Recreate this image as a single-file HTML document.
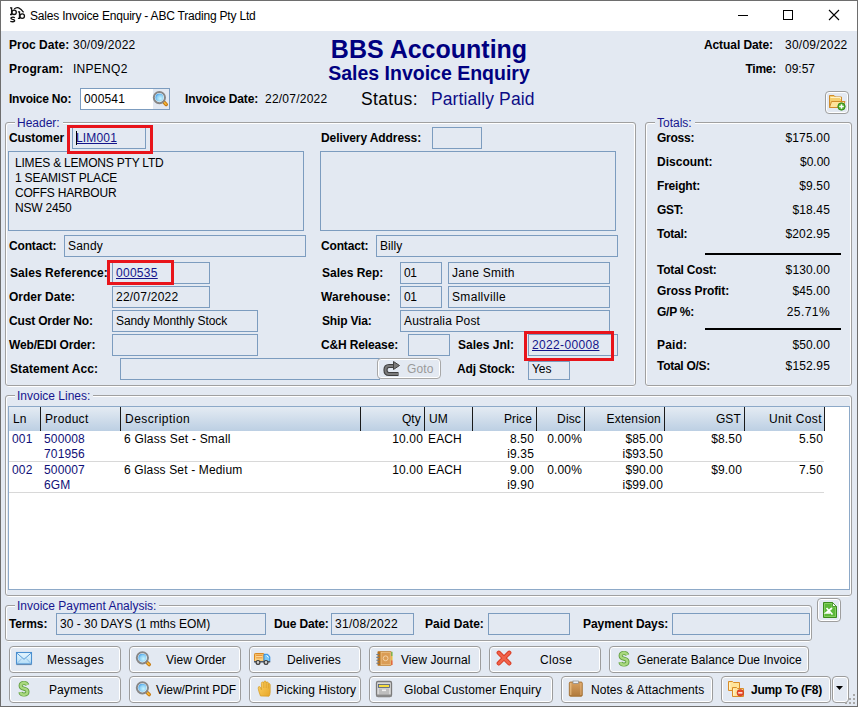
<!DOCTYPE html>
<html><head><meta charset="utf-8"><style>
html,body{margin:0;padding:0;width:858px;height:707px;overflow:hidden;background:#E3E9F2;}
.t{position:absolute;font-family:"Liberation Sans",sans-serif;white-space:pre;}
svg{overflow:visible}
</style></head><body>
<div style="position:absolute;left:0px;top:0px;width:858px;height:707px;box-sizing:border-box;border:1px solid #6E6E6E;background:#E3E9F2"></div>
<div style="position:absolute;left:1px;top:1px;width:856px;height:30px;box-sizing:border-box;background:#fff"></div>
<div class="t" style="left:30px;top:10px;font-size:12px;line-height:12px;font-weight:400;color:#000;letter-spacing:-0.2px;">Sales Invoice Enquiry - ABC Trading Pty Ltd</div>
<div style="position:absolute;left:738px;top:15px;width:10px;height:1px;box-sizing:border-box;background:#000"></div>
<div style="position:absolute;left:783px;top:10px;width:10px;height:10px;box-sizing:border-box;border:1px solid #000"></div>
<svg style="position:absolute;left:828px;top:9px" width="12" height="12" viewBox="0 0 12 12"><path d="M1 1 L11 11 M11 1 L1 11" stroke="#000" stroke-width="1.1"/></svg>
<div class="t" style="left:9px;top:39px;font-size:12px;line-height:12px;font-weight:700;color:#000;letter-spacing:0.02px;">Proc Date:</div>
<div class="t" style="left:73px;top:39px;font-size:12px;line-height:12px;font-weight:400;color:#000;letter-spacing:0.24px;">30/09/2022</div>
<div class="t" style="left:9px;top:63px;font-size:12px;line-height:12px;font-weight:700;color:#000;letter-spacing:0.13px;">Program:</div>
<div class="t" style="left:73px;top:63px;font-size:12px;line-height:12px;font-weight:400;color:#000;letter-spacing:0.27px;">INPENQ2</div>
<div class="t" style="left:129px;width:600px;text-align:center;top:37px;font-size:25px;line-height:25px;font-weight:700;color:#000080;">BBS Accounting</div>
<div class="t" style="left:129px;width:600px;text-align:center;top:64px;font-size:19.5px;line-height:19.5px;font-weight:700;color:#000080;">Sales Invoice Enquiry</div>
<div class="t" style="right:85px;top:39px;font-size:12px;line-height:12px;font-weight:700;color:#000;letter-spacing:-0.08px;">Actual Date:</div>
<div class="t" style="left:785px;top:39px;font-size:12px;line-height:12px;font-weight:400;color:#000;letter-spacing:0.24px;">30/09/2022</div>
<div class="t" style="right:82px;top:63px;font-size:12px;line-height:12px;font-weight:700;color:#000;letter-spacing:-0.25px;">Time:</div>
<div class="t" style="left:785px;top:63px;font-size:12px;line-height:12px;font-weight:400;color:#000;letter-spacing:0.0px;">09:57</div>
<div class="t" style="left:9px;top:93px;font-size:12px;line-height:12px;font-weight:700;color:#000;letter-spacing:-0.23px;">Invoice No:</div>
<div style="position:absolute;left:80px;top:88px;width:90px;height:22px;box-sizing:border-box;border:1px solid #7C9CBF;background:#fff;"></div>
<div style="position:absolute;left:153px;top:89px;width:16px;height:20px;box-sizing:border-box;background:#E3E9F2"></div>
<div class="t" style="left:84px;top:93px;font-size:12px;line-height:12px;font-weight:400;color:#000;letter-spacing:0.16px;">000541</div>
<div class="t" style="left:185px;top:93px;font-size:12px;line-height:12px;font-weight:700;color:#000;letter-spacing:-0.12px;">Invoice Date:</div>
<div class="t" style="left:265px;top:93px;font-size:12px;line-height:12px;font-weight:400;color:#000;letter-spacing:0.23px;">22/07/2022</div>
<div class="t" style="left:361px;top:91px;font-size:17.5px;line-height:17.5px;font-weight:400;color:#000;letter-spacing:0.35px;">Status:</div>
<div class="t" style="left:431px;top:91px;font-size:17.5px;line-height:17.5px;font-weight:400;color:#0C0C86;letter-spacing:0.1px;">Partially Paid</div>
<div style="position:absolute;left:825px;top:91px;width:24px;height:23px;box-sizing:border-box;border:1px solid #9E9E9E;border-radius:4px;box-shadow:inset 0 0 0 1px #fff;"></div>
<div style="position:absolute;left:6px;top:123px;width:629px;height:264px;box-sizing:border-box;border:1px solid #fff;border-radius:3px;"></div>
<div style="position:absolute;left:5px;top:122px;width:631px;height:264px;box-sizing:border-box;border:1px solid #A0A0A0;border-radius:3px;"></div>
<div class="t" style="left:15px;top:116px;font-size:12px;line-height:14px;color:#16168F;background:#E3E9F2;padding:0 3px 0 2px">Header:</div>
<div class="t" style="left:9px;top:132px;font-size:12px;line-height:12px;font-weight:700;color:#000;letter-spacing:-0.13px;">Customer</div>
<div style="position:absolute;left:72px;top:127px;width:74px;height:22px;box-sizing:border-box;border:1px solid #7C9CBF;background:#E3E9F2;"></div>
<div class="t" style="left:76px;top:132px;font-size:12px;line-height:12px;font-weight:400;color:#14148A;letter-spacing:0.16px;"><u>LIM001</u></div>
<div style="position:absolute;left:76px;top:131px;width:1px;height:14px;box-sizing:border-box;background:#000"></div>
<div style="position:absolute;left:67px;top:125px;width:86px;height:29px;box-sizing:border-box;border:3px solid #E8141B;z-index:4;"></div>
<div class="t" style="left:321px;top:132px;font-size:12px;line-height:12px;font-weight:700;color:#000;letter-spacing:-0.09px;">Delivery Address:</div>
<div style="position:absolute;left:432px;top:127px;width:50px;height:22px;box-sizing:border-box;border:1px solid #7C9CBF;background:#E3E9F2;"></div>
<div style="position:absolute;left:8px;top:151px;width:296px;height:80px;box-sizing:border-box;border:1px solid #7C9CBF;background:#E3E9F2;"></div>
<div class="t" style="left:15px;top:157px;font-size:12px;line-height:12px;font-weight:400;color:#000;letter-spacing:-0.2px;">LIMES &amp; LEMONS PTY LTD</div>
<div class="t" style="left:15px;top:172px;font-size:12px;line-height:12px;font-weight:400;color:#000;letter-spacing:-0.2px;">1 SEAMIST PLACE</div>
<div class="t" style="left:15px;top:187px;font-size:12px;line-height:12px;font-weight:400;color:#000;letter-spacing:-0.2px;">COFFS HARBOUR</div>
<div class="t" style="left:15px;top:202px;font-size:12px;line-height:12px;font-weight:400;color:#000;letter-spacing:-0.2px;">NSW 2450</div>
<div style="position:absolute;left:320px;top:151px;width:296px;height:80px;box-sizing:border-box;border:1px solid #7C9CBF;background:#E3E9F2;"></div>
<div class="t" style="left:9px;top:240px;font-size:12px;line-height:12px;font-weight:700;color:#000;letter-spacing:-0.17px;">Contact:</div>
<div style="position:absolute;left:64px;top:235px;width:242px;height:22px;box-sizing:border-box;border:1px solid #7C9CBF;background:#E3E9F2;"></div>
<div class="t" style="left:68px;top:240px;font-size:12px;line-height:12px;font-weight:400;color:#000;letter-spacing:0.2px;">Sandy</div>
<div class="t" style="left:321px;top:240px;font-size:12px;line-height:12px;font-weight:700;color:#000;letter-spacing:-0.17px;">Contact:</div>
<div style="position:absolute;left:376px;top:235px;width:242px;height:22px;box-sizing:border-box;border:1px solid #7C9CBF;background:#E3E9F2;"></div>
<div class="t" style="left:380px;top:240px;font-size:12px;line-height:12px;font-weight:400;color:#000;letter-spacing:0.08px;">Billy</div>
<div class="t" style="left:10px;top:267px;font-size:12px;line-height:12px;font-weight:700;color:#000;letter-spacing:0.07px;">Sales Reference:</div>
<div style="position:absolute;left:112px;top:262px;width:98px;height:22px;box-sizing:border-box;border:1px solid #7C9CBF;background:#E3E9F2;"></div>
<div class="t" style="left:116px;top:267px;font-size:12px;line-height:12px;font-weight:400;color:#14148A;letter-spacing:0.28px;"><u>000535</u></div>
<div style="position:absolute;left:107px;top:260px;width:67px;height:25px;box-sizing:border-box;border:3px solid #E8141B;z-index:4;"></div>
<div class="t" style="left:9px;top:291px;font-size:12px;line-height:12px;font-weight:700;color:#000;letter-spacing:0.01px;">Order Date:</div>
<div style="position:absolute;left:112px;top:286px;width:98px;height:22px;box-sizing:border-box;border:1px solid #7C9CBF;background:#E3E9F2;"></div>
<div class="t" style="left:116px;top:291px;font-size:12px;line-height:12px;font-weight:400;color:#000;letter-spacing:0.23px;">22/07/2022</div>
<div class="t" style="left:9px;top:315px;font-size:12px;line-height:12px;font-weight:700;color:#000;letter-spacing:-0.16px;">Cust Order No:</div>
<div style="position:absolute;left:112px;top:310px;width:146px;height:22px;box-sizing:border-box;border:1px solid #7C9CBF;background:#E3E9F2;"></div>
<div class="t" style="left:116px;top:315px;font-size:12px;line-height:12px;font-weight:400;color:#000;letter-spacing:-0.08px;">Sandy Monthly Stock</div>
<div class="t" style="left:9px;top:339px;font-size:12px;line-height:12px;font-weight:700;color:#000;letter-spacing:-0.16px;">Web/EDI Order:</div>
<div style="position:absolute;left:112px;top:334px;width:146px;height:22px;box-sizing:border-box;border:1px solid #7C9CBF;background:#E3E9F2;"></div>
<div class="t" style="left:10px;top:363px;font-size:12px;line-height:12px;font-weight:700;color:#000;letter-spacing:0.08px;">Statement Acc:</div>
<div style="position:absolute;left:120px;top:358px;width:260px;height:22px;box-sizing:border-box;border:1px solid #7C9CBF;background:#E3E9F2;"></div>
<div class="t" style="left:322px;top:267px;font-size:12px;line-height:12px;font-weight:700;color:#000;letter-spacing:-0.01px;">Sales Rep:</div>
<div style="position:absolute;left:400px;top:262px;width:42px;height:22px;box-sizing:border-box;border:1px solid #7C9CBF;background:#E3E9F2;"></div>
<div class="t" style="left:404px;top:267px;font-size:12px;line-height:12px;font-weight:400;color:#000;letter-spacing:-0.5px;">01</div>
<div style="position:absolute;left:448px;top:262px;width:162px;height:22px;box-sizing:border-box;border:1px solid #7C9CBF;background:#E3E9F2;"></div>
<div class="t" style="left:452px;top:267px;font-size:12px;line-height:12px;font-weight:400;color:#000;letter-spacing:0.27px;">Jane Smith</div>
<div class="t" style="left:321px;top:291px;font-size:12px;line-height:12px;font-weight:700;color:#000;letter-spacing:0.13px;">Warehouse:</div>
<div style="position:absolute;left:400px;top:286px;width:42px;height:22px;box-sizing:border-box;border:1px solid #7C9CBF;background:#E3E9F2;"></div>
<div class="t" style="left:404px;top:291px;font-size:12px;line-height:12px;font-weight:400;color:#000;letter-spacing:-0.5px;">01</div>
<div style="position:absolute;left:448px;top:286px;width:162px;height:22px;box-sizing:border-box;border:1px solid #7C9CBF;background:#E3E9F2;"></div>
<div class="t" style="left:452px;top:291px;font-size:12px;line-height:12px;font-weight:400;color:#000;letter-spacing:0.32px;">Smallville</div>
<div class="t" style="left:322px;top:315px;font-size:12px;line-height:12px;font-weight:700;color:#000;letter-spacing:-0.17px;">Ship Via:</div>
<div style="position:absolute;left:400px;top:310px;width:210px;height:22px;box-sizing:border-box;border:1px solid #7C9CBF;background:#E3E9F2;"></div>
<div class="t" style="left:404px;top:315px;font-size:12px;line-height:12px;font-weight:400;color:#000;letter-spacing:0.14px;">Australia Post</div>
<div class="t" style="left:321px;top:339px;font-size:12px;line-height:12px;font-weight:700;color:#000;letter-spacing:-0.14px;">C&amp;H Release:</div>
<div style="position:absolute;left:408px;top:334px;width:42px;height:22px;box-sizing:border-box;border:1px solid #7C9CBF;background:#E3E9F2;"></div>
<div class="t" style="left:458px;top:339px;font-size:12px;line-height:12px;font-weight:700;color:#000;letter-spacing:0.01px;">Sales Jnl:</div>
<div style="position:absolute;left:528px;top:334px;width:90px;height:22px;box-sizing:border-box;border:1px solid #7C9CBF;background:#E3E9F2;"></div>
<div class="t" style="left:532px;top:339px;font-size:12px;line-height:12px;font-weight:400;color:#14148A;letter-spacing:0.34px;"><u>2022-00008</u></div>
<div style="position:absolute;left:524px;top:331px;width:90px;height:30px;box-sizing:border-box;border:3px solid #E8141B;z-index:4;"></div>
<div style="position:absolute;left:377px;top:358px;width:64px;height:21px;box-sizing:border-box;border:1px solid #A8A8A8;border-radius:4px;background:#E3E9F2;box-shadow:inset 0 0 0 1px #fff;"></div>
<div class="t" style="left:407px;top:363px;font-size:12px;line-height:12px;font-weight:400;color:#9A9A9A;letter-spacing:0.15px;">Goto</div>
<div class="t" style="left:457px;top:363px;font-size:12px;line-height:12px;font-weight:700;color:#000;letter-spacing:-0.14px;">Adj Stock:</div>
<div style="position:absolute;left:528px;top:361px;width:42px;height:19px;box-sizing:border-box;border:1px solid #7C9CBF;background:#E3E9F2;"></div>
<div class="t" style="left:532px;top:363px;font-size:12px;line-height:12px;font-weight:400;color:#000;letter-spacing:-0.05px;">Yes</div>
<div style="position:absolute;left:646px;top:123px;width:205px;height:264px;box-sizing:border-box;border:1px solid #fff;border-radius:3px;"></div>
<div style="position:absolute;left:645px;top:122px;width:207px;height:264px;box-sizing:border-box;border:1px solid #A0A0A0;border-radius:3px;"></div>
<div class="t" style="left:655px;top:116px;font-size:12px;line-height:14px;color:#16168F;background:#E3E9F2;padding:0 3px 0 2px">Totals:</div>
<div class="t" style="left:657px;top:132px;font-size:12px;line-height:12px;font-weight:700;color:#000;letter-spacing:-0.24px;">Gross:</div>
<div class="t" style="right:28px;top:132px;font-size:12px;line-height:12px;font-weight:400;color:#000;letter-spacing:0.17px;">$175.00</div>
<div class="t" style="left:657px;top:156px;font-size:12px;line-height:12px;font-weight:700;color:#000;letter-spacing:0.01px;">Discount:</div>
<div class="t" style="right:28px;top:156px;font-size:12px;line-height:12px;font-weight:400;color:#000;letter-spacing:0.0px;">$0.00</div>
<div class="t" style="left:657px;top:180px;font-size:12px;line-height:12px;font-weight:700;color:#000;letter-spacing:-0.2px;">Freight:</div>
<div class="t" style="right:28px;top:180px;font-size:12px;line-height:12px;font-weight:400;color:#000;letter-spacing:0.15px;">$9.50</div>
<div class="t" style="left:657px;top:204px;font-size:12px;line-height:12px;font-weight:700;color:#000;letter-spacing:-0.3px;">GST:</div>
<div class="t" style="right:28px;top:204px;font-size:12px;line-height:12px;font-weight:400;color:#000;letter-spacing:0.15px;">$18.45</div>
<div class="t" style="left:657px;top:228px;font-size:12px;line-height:12px;font-weight:700;color:#000;letter-spacing:-0.26px;">Total:</div>
<div class="t" style="right:28px;top:228px;font-size:12px;line-height:12px;font-weight:400;color:#000;letter-spacing:0.17px;">$202.95</div>
<div class="t" style="left:657px;top:264px;font-size:12px;line-height:12px;font-weight:700;color:#000;letter-spacing:-0.21px;">Total Cost:</div>
<div class="t" style="right:28px;top:264px;font-size:12px;line-height:12px;font-weight:400;color:#000;letter-spacing:0.15px;">$130.00</div>
<div class="t" style="left:657px;top:285px;font-size:12px;line-height:12px;font-weight:700;color:#000;letter-spacing:-0.09px;">Gross Profit:</div>
<div class="t" style="right:28px;top:285px;font-size:12px;line-height:12px;font-weight:400;color:#000;letter-spacing:0.15px;">$45.00</div>
<div class="t" style="left:657px;top:306px;font-size:12px;line-height:12px;font-weight:700;color:#000;letter-spacing:-0.25px;">G/P %:</div>
<div class="t" style="right:28px;top:306px;font-size:12px;line-height:12px;font-weight:400;color:#000;letter-spacing:0.44px;">25.71%</div>
<div class="t" style="left:657px;top:339px;font-size:12px;line-height:12px;font-weight:700;color:#000;letter-spacing:0.17px;">Paid:</div>
<div class="t" style="right:28px;top:339px;font-size:12px;line-height:12px;font-weight:400;color:#000;letter-spacing:0.15px;">$50.00</div>
<div class="t" style="left:657px;top:360px;font-size:12px;line-height:12px;font-weight:700;color:#000;letter-spacing:-0.27px;">Total O/S:</div>
<div class="t" style="right:28px;top:360px;font-size:12px;line-height:12px;font-weight:400;color:#000;letter-spacing:0.15px;">$152.95</div>
<div style="position:absolute;left:705px;top:253px;width:136px;height:2px;box-sizing:border-box;background:#000"></div>
<div style="position:absolute;left:705px;top:328px;width:136px;height:2px;box-sizing:border-box;background:#000"></div>
<div style="position:absolute;left:6px;top:396px;width:845px;height:201px;box-sizing:border-box;border:1px solid #fff;border-radius:3px;"></div>
<div style="position:absolute;left:5px;top:395px;width:847px;height:201px;box-sizing:border-box;border:1px solid #A0A0A0;border-radius:3px;"></div>
<div class="t" style="left:15px;top:389px;font-size:12px;line-height:14px;color:#16168F;background:#E3E9F2;padding:0 3px 0 2px">Invoice Lines:</div>
<div style="position:absolute;left:8px;top:406px;width:842px;height:184px;box-sizing:border-box;border:1px solid #8DA9C8;background:#fff;"></div>
<div style="position:absolute;left:9px;top:407px;width:815px;height:24px;box-sizing:border-box;background:linear-gradient(#E4EBF3,#BCCFE3);"></div>
<div style="position:absolute;left:40px;top:407px;width:1px;height:24px;box-sizing:border-box;background:#1a1a1a"></div>
<div style="position:absolute;left:120px;top:407px;width:1px;height:24px;box-sizing:border-box;background:#1a1a1a"></div>
<div style="position:absolute;left:360px;top:407px;width:1px;height:24px;box-sizing:border-box;background:#1a1a1a"></div>
<div style="position:absolute;left:424px;top:407px;width:1px;height:24px;box-sizing:border-box;background:#1a1a1a"></div>
<div style="position:absolute;left:472px;top:407px;width:1px;height:24px;box-sizing:border-box;background:#1a1a1a"></div>
<div style="position:absolute;left:536px;top:407px;width:1px;height:24px;box-sizing:border-box;background:#1a1a1a"></div>
<div style="position:absolute;left:584px;top:407px;width:1px;height:24px;box-sizing:border-box;background:#1a1a1a"></div>
<div style="position:absolute;left:664px;top:407px;width:1px;height:24px;box-sizing:border-box;background:#1a1a1a"></div>
<div style="position:absolute;left:744px;top:407px;width:1px;height:24px;box-sizing:border-box;background:#1a1a1a"></div>
<div style="position:absolute;left:824px;top:407px;width:1px;height:24px;box-sizing:border-box;background:#1a1a1a"></div>
<div class="t" style="left:13px;top:413px;font-size:12px;line-height:12px;font-weight:400;color:#000;letter-spacing:0.15px;">Ln</div>
<div class="t" style="left:45px;top:413px;font-size:12px;line-height:12px;font-weight:400;color:#000;letter-spacing:0.32px;">Product</div>
<div class="t" style="left:125px;top:413px;font-size:12px;line-height:12px;font-weight:400;color:#000;letter-spacing:0.47px;">Description</div>
<div class="t" style="right:437px;top:413px;font-size:12px;line-height:12px;font-weight:400;color:#000;letter-spacing:0.15px;">Qty</div>
<div class="t" style="left:429px;top:413px;font-size:12px;line-height:12px;font-weight:400;color:#000;letter-spacing:0.15px;">UM</div>
<div class="t" style="right:326px;top:413px;font-size:12px;line-height:12px;font-weight:400;color:#000;letter-spacing:0.15px;">Price</div>
<div class="t" style="right:277px;top:413px;font-size:12px;line-height:12px;font-weight:400;color:#000;letter-spacing:0.15px;">Disc</div>
<div class="t" style="right:197px;top:413px;font-size:12px;line-height:12px;font-weight:400;color:#000;letter-spacing:0.19px;">Extension</div>
<div class="t" style="right:117px;top:413px;font-size:12px;line-height:12px;font-weight:400;color:#000;letter-spacing:0.15px;">GST</div>
<div class="t" style="right:36px;top:413px;font-size:12px;line-height:12px;font-weight:400;color:#000;letter-spacing:0.4px;">Unit Cost</div>
<div class="t" style="left:12px;top:433px;font-size:12px;line-height:12px;font-weight:400;color:#101078;letter-spacing:0.15px;">001</div>
<div class="t" style="left:44px;top:433px;font-size:12px;line-height:12px;font-weight:400;color:#101078;letter-spacing:0.15px;">500008</div>
<div class="t" style="left:44px;top:448px;font-size:12px;line-height:12px;font-weight:400;color:#101078;letter-spacing:0.15px;">701956</div>
<div class="t" style="left:124px;top:433px;font-size:12px;line-height:12px;font-weight:400;color:#000;letter-spacing:0.21px;">6 Glass Set - Small</div>
<div class="t" style="right:435px;top:433px;font-size:12px;line-height:12px;font-weight:400;color:#000;letter-spacing:0.15px;">10.00</div>
<div class="t" style="left:428px;top:433px;font-size:12px;line-height:12px;font-weight:400;color:#000;letter-spacing:0.15px;">EACH</div>
<div class="t" style="right:324px;top:433px;font-size:12px;line-height:12px;font-weight:400;color:#000;letter-spacing:0.15px;">8.50</div>
<div class="t" style="right:324px;top:448px;font-size:12px;line-height:12px;font-weight:400;color:#000;letter-spacing:0.15px;">i9.35</div>
<div class="t" style="right:276px;top:433px;font-size:12px;line-height:12px;font-weight:400;color:#000;letter-spacing:0.15px;">0.00%</div>
<div class="t" style="right:195px;top:433px;font-size:12px;line-height:12px;font-weight:400;color:#000;letter-spacing:0.15px;">$85.00</div>
<div class="t" style="right:195px;top:448px;font-size:12px;line-height:12px;font-weight:400;color:#000;letter-spacing:0.15px;">i$93.50</div>
<div class="t" style="right:116px;top:433px;font-size:12px;line-height:12px;font-weight:400;color:#000;letter-spacing:0.15px;">$8.50</div>
<div class="t" style="right:35px;top:433px;font-size:12px;line-height:12px;font-weight:400;color:#000;letter-spacing:0.15px;">5.50</div>
<div class="t" style="left:12px;top:464px;font-size:12px;line-height:12px;font-weight:400;color:#101078;letter-spacing:0.15px;">002</div>
<div class="t" style="left:44px;top:464px;font-size:12px;line-height:12px;font-weight:400;color:#101078;letter-spacing:0.15px;">500007</div>
<div class="t" style="left:44px;top:479px;font-size:12px;line-height:12px;font-weight:400;color:#101078;letter-spacing:0.15px;">6GM</div>
<div class="t" style="left:124px;top:464px;font-size:12px;line-height:12px;font-weight:400;color:#000;letter-spacing:0.15px;">6 Glass Set - Medium</div>
<div class="t" style="right:435px;top:464px;font-size:12px;line-height:12px;font-weight:400;color:#000;letter-spacing:0.15px;">10.00</div>
<div class="t" style="left:428px;top:464px;font-size:12px;line-height:12px;font-weight:400;color:#000;letter-spacing:0.15px;">EACH</div>
<div class="t" style="right:324px;top:464px;font-size:12px;line-height:12px;font-weight:400;color:#000;letter-spacing:0.15px;">9.00</div>
<div class="t" style="right:324px;top:479px;font-size:12px;line-height:12px;font-weight:400;color:#000;letter-spacing:0.15px;">i9.90</div>
<div class="t" style="right:276px;top:464px;font-size:12px;line-height:12px;font-weight:400;color:#000;letter-spacing:0.15px;">0.00%</div>
<div class="t" style="right:195px;top:464px;font-size:12px;line-height:12px;font-weight:400;color:#000;letter-spacing:0.15px;">$90.00</div>
<div class="t" style="right:195px;top:479px;font-size:12px;line-height:12px;font-weight:400;color:#000;letter-spacing:0.15px;">i$99.00</div>
<div class="t" style="right:116px;top:464px;font-size:12px;line-height:12px;font-weight:400;color:#000;letter-spacing:0.15px;">$9.00</div>
<div class="t" style="right:35px;top:464px;font-size:12px;line-height:12px;font-weight:400;color:#000;letter-spacing:0.15px;">7.50</div>
<div style="position:absolute;left:9px;top:461px;width:815px;height:1px;box-sizing:border-box;background:#D8D8D8"></div>
<div style="position:absolute;left:9px;top:492px;width:815px;height:1px;box-sizing:border-box;background:#D8D8D8"></div>
<div style="position:absolute;left:6px;top:606px;width:805px;height:36px;box-sizing:border-box;border:1px solid #fff;border-radius:3px;"></div>
<div style="position:absolute;left:5px;top:605px;width:807px;height:36px;box-sizing:border-box;border:1px solid #A0A0A0;border-radius:3px;"></div>
<div class="t" style="left:15px;top:599px;font-size:12px;line-height:14px;color:#16168F;background:#E3E9F2;padding:0 3px 0 2px">Invoice Payment Analysis:</div>
<div class="t" style="left:9px;top:618px;font-size:12px;line-height:12px;font-weight:700;color:#000;letter-spacing:-0.15px;">Terms:</div>
<div style="position:absolute;left:56px;top:613px;width:210px;height:22px;box-sizing:border-box;border:1px solid #7C9CBF;background:#E3E9F2;"></div>
<div class="t" style="left:60px;top:618px;font-size:12px;line-height:12px;font-weight:400;color:#000;letter-spacing:-0.01px;">30 - 30 DAYS (1 mths EOM)</div>
<div class="t" style="left:274px;top:618px;font-size:12px;line-height:12px;font-weight:700;color:#000;letter-spacing:-0.15px;">Due Date:</div>
<div style="position:absolute;left:331px;top:613px;width:83px;height:22px;box-sizing:border-box;border:1px solid #7C9CBF;background:#E3E9F2;"></div>
<div class="t" style="left:335px;top:618px;font-size:12px;line-height:12px;font-weight:400;color:#000;letter-spacing:0.29px;">31/08/2022</div>
<div class="t" style="left:425px;top:618px;font-size:12px;line-height:12px;font-weight:700;color:#000;letter-spacing:0.02px;">Paid Date:</div>
<div style="position:absolute;left:488px;top:613px;width:82px;height:22px;box-sizing:border-box;border:1px solid #7C9CBF;background:#E3E9F2;"></div>
<div class="t" style="left:583px;top:618px;font-size:12px;line-height:12px;font-weight:700;color:#000;letter-spacing:-0.06px;">Payment Days:</div>
<div style="position:absolute;left:672px;top:613px;width:138px;height:22px;box-sizing:border-box;border:1px solid #7C9CBF;background:#E3E9F2;"></div>
<div style="position:absolute;left:817px;top:598px;width:24px;height:24px;box-sizing:border-box;border:1px solid #9E9E9E;border-radius:4px;box-shadow:inset 0 0 0 1px #fff;"></div>
<div style="position:absolute;left:9px;top:646px;width:112px;height:27px;box-sizing:border-box;border:1px solid #9C9C9C;border-radius:4px;box-shadow:inset 0 0 0 1px #fff;"></div>
<div class="t" style="left:47px;top:654px;font-size:12px;line-height:12px;font-weight:400;color:#000;letter-spacing:0.3px;">Messages</div>
<div style="position:absolute;left:129px;top:646px;width:112px;height:27px;box-sizing:border-box;border:1px solid #9C9C9C;border-radius:4px;box-shadow:inset 0 0 0 1px #fff;"></div>
<div class="t" style="left:166px;top:654px;font-size:12px;line-height:12px;font-weight:400;color:#000;letter-spacing:0px;">View Order</div>
<div style="position:absolute;left:249px;top:646px;width:112px;height:27px;box-sizing:border-box;border:1px solid #9C9C9C;border-radius:4px;box-shadow:inset 0 0 0 1px #fff;"></div>
<div class="t" style="left:287px;top:654px;font-size:12px;line-height:12px;font-weight:400;color:#000;letter-spacing:0.13px;">Deliveries</div>
<div style="position:absolute;left:369px;top:646px;width:112px;height:27px;box-sizing:border-box;border:1px solid #9C9C9C;border-radius:4px;box-shadow:inset 0 0 0 1px #fff;"></div>
<div class="t" style="left:401px;top:654px;font-size:12px;line-height:12px;font-weight:400;color:#000;letter-spacing:0.08px;">View Journal</div>
<div style="position:absolute;left:489px;top:646px;width:112px;height:27px;box-sizing:border-box;border:1px solid #9C9C9C;border-radius:4px;box-shadow:inset 0 0 0 1px #fff;"></div>
<div class="t" style="left:540px;top:654px;font-size:12px;line-height:12px;font-weight:400;color:#000;letter-spacing:0.35px;">Close</div>
<div style="position:absolute;left:609px;top:646px;width:200px;height:27px;box-sizing:border-box;border:1px solid #9C9C9C;border-radius:4px;box-shadow:inset 0 0 0 1px #fff;"></div>
<div class="t" style="left:637px;top:654px;font-size:12px;line-height:12px;font-weight:400;color:#000;letter-spacing:0.05px;">Generate Balance Due Invoice</div>
<div style="position:absolute;left:9px;top:676px;width:112px;height:27px;box-sizing:border-box;border:1px solid #9C9C9C;border-radius:4px;box-shadow:inset 0 0 0 1px #fff;"></div>
<div class="t" style="left:49px;top:684px;font-size:12px;line-height:12px;font-weight:400;color:#000;letter-spacing:0.08px;">Payments</div>
<div style="position:absolute;left:129px;top:676px;width:112px;height:27px;box-sizing:border-box;border:1px solid #9C9C9C;border-radius:4px;box-shadow:inset 0 0 0 1px #fff;"></div>
<div class="t" style="left:156px;top:684px;font-size:12px;line-height:12px;font-weight:400;color:#000;letter-spacing:-0.08px;">View/Print PDF</div>
<div style="position:absolute;left:249px;top:676px;width:112px;height:27px;box-sizing:border-box;border:1px solid #9C9C9C;border-radius:4px;box-shadow:inset 0 0 0 1px #fff;"></div>
<div class="t" style="left:276px;top:684px;font-size:12px;line-height:12px;font-weight:400;color:#000;letter-spacing:0.05px;">Picking History</div>
<div style="position:absolute;left:369px;top:676px;width:184px;height:27px;box-sizing:border-box;border:1px solid #9C9C9C;border-radius:4px;box-shadow:inset 0 0 0 1px #fff;"></div>
<div class="t" style="left:404px;top:684px;font-size:12px;line-height:12px;font-weight:400;color:#000;letter-spacing:0.14px;">Global Customer Enquiry</div>
<div style="position:absolute;left:561px;top:676px;width:152px;height:27px;box-sizing:border-box;border:1px solid #9C9C9C;border-radius:4px;box-shadow:inset 0 0 0 1px #fff;"></div>
<div class="t" style="left:591px;top:684px;font-size:12px;line-height:12px;font-weight:400;color:#000;letter-spacing:0.06px;">Notes &amp; Attachments</div>
<div style="position:absolute;left:721px;top:676px;width:110px;height:27px;box-sizing:border-box;border:1px solid #9C9C9C;border-radius:4px;box-shadow:inset 0 0 0 1px #fff;"></div>
<div class="t" style="left:751px;top:684px;font-size:12px;line-height:12px;font-weight:700;color:#000;letter-spacing:-0.29px;">Jump To (F8)</div>
<div style="position:absolute;left:832px;top:676px;width:17px;height:27px;box-sizing:border-box;border:1px solid #9C9C9C;border-radius:4px;box-shadow:inset 0 0 0 1px #fff;"></div>
<div class="t" style="left:0px;top:684px;font-size:12px;line-height:12px;font-weight:400;color:#000;letter-spacing:0.1px;"></div>
<svg style="position:absolute;left:836px;top:686px" width="8" height="5"><path d="M0 0 H7 L3.5 4 Z" fill="#000"/></svg>
<svg style="position:absolute;left:0;top:0;z-index:5" width="858" height="707" viewBox="0 0 858 707"><defs>
<radialGradient id="mg" cx="0.62" cy="0.62" r="0.7"><stop offset="0" stop-color="#C8F4FF"/><stop offset="0.6" stop-color="#8ED0F4"/><stop offset="1" stop-color="#3E9AE6"/></radialGradient>
<linearGradient id="env" x1="0" y1="0" x2="0" y2="1"><stop offset="0" stop-color="#E8F7FF"/><stop offset="1" stop-color="#B4DDF7"/></linearGradient>
<linearGradient id="cargo" x1="0" y1="0" x2="0" y2="1"><stop offset="0" stop-color="#F0B860"/><stop offset="1" stop-color="#FFD98A"/></linearGradient>
<linearGradient id="hand" x1="0" y1="0" x2="1" y2="1"><stop offset="0" stop-color="#FFD466"/><stop offset="1" stop-color="#E6A628"/></linearGradient>
<linearGradient id="clip" x1="0" y1="0" x2="0" y2="1"><stop offset="0" stop-color="#D8A060"/><stop offset="1" stop-color="#B07A3C"/></linearGradient>
</defs>
<g stroke="#111" fill="none">
<path d="M10 7.9 H11.6 V14.5 H10" stroke-width="1.3"/>
<circle cx="14.1" cy="12.3" r="2.2" stroke-width="1.3"/>
<path d="M14.9 17.8 Q13 16.6 11.2 17.6 Q10.3 18.9 12.6 19.4 Q14.9 19.8 14.6 21 Q13.4 22.3 10.3 21.3" stroke-width="1.3"/>
<path d="M17.9 11.9 H19.5 V18.3 H17.9" stroke-width="1.3"/>
<circle cx="22.2" cy="16.1" r="2.3" stroke-width="1.3"/>
<path d="M14.2 9 Q18.5 5 23.6 12.4" stroke-width="1.25"/>
</g>
<path d="M164.0 102.19999999999999 L166.20000000000002 104.39999999999999" stroke="#C57A12" stroke-width="3.6" stroke-linecap="round"/>
<path d="M164.3 102.5 L166.0 104.19999999999999" stroke="#F8B838" stroke-width="1.6" stroke-linecap="round"/>
<circle cx="159.4" cy="97.6" r="5.6" fill="#fff" stroke="#878787" stroke-width="2"/>
<circle cx="159.4" cy="97.6" r="4.1" fill="url(#mg)"/>
<path d="M147.0 662.4 L149.20000000000002 664.5999999999999" stroke="#C57A12" stroke-width="3.6" stroke-linecap="round"/>
<path d="M147.3 662.6999999999999 L149.0 664.4" stroke="#F8B838" stroke-width="1.6" stroke-linecap="round"/>
<circle cx="142.4" cy="657.8" r="5.6" fill="#fff" stroke="#878787" stroke-width="2"/>
<circle cx="142.4" cy="657.8" r="4.1" fill="url(#mg)"/>
<path d="M147.0 692.4 L149.20000000000002 694.5999999999999" stroke="#C57A12" stroke-width="3.6" stroke-linecap="round"/>
<path d="M147.3 692.6999999999999 L149.0 694.4" stroke="#F8B838" stroke-width="1.6" stroke-linecap="round"/>
<circle cx="142.4" cy="687.8" r="5.6" fill="#fff" stroke="#878787" stroke-width="2"/>
<circle cx="142.4" cy="687.8" r="4.1" fill="url(#mg)"/>
<path d="M829.5 95.5 H834 L835.5 97 H841.5 V107.5 H829.5 Z" fill="#F5CF70" stroke="#D08C2A"/>
<path d="M830.5 97.5 H840.5 V99" stroke="#FFF3C8" fill="none"/>
<path d="M831.5 101.5 H845 L842.5 107.5 H829.5 Z" fill="#FFE39A" stroke="#D08C2A"/>
<circle cx="841.5" cy="106.5" r="3.7" fill="#52B02A" stroke="#2E7E18" stroke-width="0.8"/>
<path d="M841.5 104.2 V108.8 M839.2 106.5 H843.8" stroke="#fff" stroke-width="1.5"/>
<path d="M394 366 H389 Q385.5 366 385.5 370 Q385.5 374 389 374 H398.5" stroke="#404040" stroke-width="4.2" fill="none"/>
<path d="M394 366 H389 Q385.5 366 385.5 370 Q385.5 374 389 374 H398.5" stroke="#7A7A7A" stroke-width="2" fill="none"/>
<path d="M393.5 361.5 L399.5 365.5 L393.5 369.5 Z" fill="#7A7A7A" stroke="#404040" stroke-width="1"/>
<path d="M823.5 602.5 H832.5 L836.5 606.5 V617.5 H823.5 Z" fill="#5CB83A" stroke="#3A8A1E"/>
<path d="M824.5 603.5 H832 V607 H835.5 V616.5 H824.5 Z" fill="none" stroke="#8ED46A" stroke-width="0.8"/>
<path d="M832.5 602.5 V606.5 H836.5 Z" fill="#F4FFF0" stroke="#3A8A1E" stroke-width="0.8"/>
<path d="M826.5 608 L832.5 614.5 M832 608 L826 613 H830" stroke="#fff" stroke-width="1.7" fill="none"/>
<rect x="16.5" y="652.5" width="15" height="11.5" fill="url(#env)" stroke="#4A8FD0" stroke-width="1.1"/>
<path d="M17 653.2 L24 659.3 L31 653.2" stroke="#4A8FD0" stroke-width="0.9" fill="none"/>
<path d="M17 663.5 L21.8 658.5 M31 663.5 L26.2 658.5" stroke="#7AB0E0" stroke-width="0.7" fill="none"/>
<rect x="16.5" y="664.2" width="15" height="0.9" fill="#5A7FA8"/>
<path d="M27.3 685.0 Q26.6 683.0 24 683.0 Q20.6 683.0 20.6 685.8 Q20.6 688.0 24 688.6999999999999 Q27.5 689.4 27.5 691.8 Q27.5 694.5999999999999 24 694.5999999999999 Q20.8 694.5999999999999 20.4 692.1999999999999 M24 681.4 V683.3 M24 694.4 V696.1999999999999" stroke="#5E9C3E" stroke-width="4" fill="none" stroke-linecap="butt"/>
<path d="M27.3 685.0 Q26.6 683.0 24 683.0 Q20.6 683.0 20.6 685.8 Q20.6 688.0 24 688.6999999999999 Q27.5 689.4 27.5 691.8 Q27.5 694.5999999999999 24 694.5999999999999 Q20.8 694.5999999999999 20.4 692.1999999999999 M24 681.4 V683.3 M24 694.4 V696.1999999999999" stroke="#A9D97F" stroke-width="2.3" fill="none"/>
<path d="M627.3 655.0 Q626.6 653.0 624 653.0 Q620.6 653.0 620.6 655.8 Q620.6 658.0 624 658.6999999999999 Q627.5 659.4 627.5 661.8 Q627.5 664.5999999999999 624 664.5999999999999 Q620.8 664.5999999999999 620.4 662.1999999999999 M624 651.4 V653.3 M624 664.4 V666.1999999999999" stroke="#5E9C3E" stroke-width="4" fill="none" stroke-linecap="butt"/>
<path d="M627.3 655.0 Q626.6 653.0 624 653.0 Q620.6 653.0 620.6 655.8 Q620.6 658.0 624 658.6999999999999 Q627.5 659.4 627.5 661.8 Q627.5 664.5999999999999 624 664.5999999999999 Q620.8 664.5999999999999 620.4 662.1999999999999 M624 651.4 V653.3 M624 664.4 V666.1999999999999" stroke="#A9D97F" stroke-width="2.3" fill="none"/>
<rect x="254.5" y="653.5" width="9.5" height="7.8" rx="0.8" fill="url(#cargo)" stroke="#DA8A22" stroke-width="1"/>
<path d="M256.2 655.5 H262.3 M256.2 657.8 H262.3" stroke="#E9963C" stroke-width="1"/>
<path d="M256.2 656.6 H262.3" stroke="#FFE0A8" stroke-width="0.8"/>
<path d="M264 654.3 H267.8 L269.8 656.8 V661.5 H264 Z" fill="#7CC8F6" stroke="#2C8CE2" stroke-width="1"/>
<path d="M266.5 655.5 L268.5 657.5" stroke="#fff" stroke-width="0.9"/>
<rect x="254" y="661" width="16.2" height="1.5" fill="#4E5A6A"/>
<circle cx="258" cy="662.4" r="1.9" fill="#D0D0D0" stroke="#3A3A3A" stroke-width="1.2"/>
<circle cx="266" cy="662.4" r="1.9" fill="#D0D0D0" stroke="#3A3A3A" stroke-width="1.2"/>
<rect x="377.5" y="651.3" width="14" height="14.5" rx="0.8" fill="#B8721E"/>
<rect x="381" y="652.3" width="9.3" height="12.4" fill="#DA9C55" stroke="#F0C890" stroke-width="0.8"/>
<circle cx="385.6" cy="658.3" r="2.4" fill="none" stroke="#F6D8B0" stroke-width="0.9"/>
<path d="M376.3 654.5 H379.2 M376.3 657.4 H379.2 M376.3 660.3 H379.2 M376.3 663.2 H379.2" stroke="#6E7E90" stroke-width="1.1"/>
<rect x="391.3" y="651.8" width="1.2" height="4.3" fill="#6CB030"/>
<rect x="391.3" y="656.1" width="1.2" height="4.3" fill="#F0C030"/>
<rect x="391.3" y="660.4" width="1.2" height="4.6" fill="#E85020"/>
<path d="M498.8 652.8 L509.2 663.3 M509.2 652.8 L498.8 663.3" stroke="#D83A22" stroke-width="4.4" stroke-linecap="round"/>
<path d="M498.8 652.8 L509.2 663.3 M509.2 652.8 L498.8 663.3" stroke="#F0624A" stroke-width="2.6" stroke-linecap="round"/>
<path d="M260.5 696 Q258.5 691 258.2 688.5 Q258 686.2 259.6 686.5 Q260.8 687 261.4 689.6 V683.3 Q261.4 682 262.6 682 Q263.8 682 263.8 683.3 V682.4 Q263.8 681 265 681 Q266.2 681 266.2 682.4 V683 Q266.2 682 267.3 682 Q268.4 682 268.4 683.2 V684.2 Q268.6 683.5 269.4 683.6 Q270.2 683.8 270.2 685 V692.5 Q270 695 269 696.2 Z" fill="url(#hand)" stroke="#D49A22" stroke-width="0.7"/>
<path d="M263.8 683.3 V688 M266.2 682.6 V688 M268.4 684 V688.5" stroke="#D9A030" stroke-width="0.8"/>
<rect x="376.5" y="681.5" width="15" height="15" rx="1.5" fill="#D8D8D8" stroke="#7A7A7A" stroke-width="1.3"/>
<rect x="378.5" y="684.5" width="11" height="3" fill="#F6DC40" stroke="#4A5A80" stroke-width="0.8"/>
<rect x="379" y="688.5" width="10" height="6" fill="#BEBEBE"/>
<rect x="382" y="689.5" width="4" height="1.6" fill="#F0F0F0"/>
<rect x="376.5" y="694.5" width="15" height="2.3" fill="#8A8A8A"/>
<rect x="569.3" y="682" width="13" height="14.3" rx="1.2" fill="url(#clip)" stroke="#A06A2A" stroke-width="0.8"/>
<path d="M570.8 683 V695" stroke="#F0C890" stroke-width="0.9"/>
<path d="M580.9 683 V695" stroke="#E8B880" stroke-width="0.8"/>
<rect x="573" y="681" width="5.4" height="2.4" fill="#E8EEF6" stroke="#8A8A8A" stroke-width="0.7"/>
<path d="M728.5 681.5 H732.5 L733.5 682.5 H739.5 V690.5 H728.5 Z" fill="#FFE49A" stroke="#D88C28" stroke-width="1"/>
<path d="M729.8 683 V689.5" stroke="#FFF8D8" stroke-width="1"/>
<path d="M732.5 687.5 H736.5 L737.5 688.5 H743.5 V696.5 H732.5 Z" fill="#FFE49A" stroke="#D88C28" stroke-width="1"/>
<path d="M733.8 689 V695.5" stroke="#FFF8D8" stroke-width="1"/>
<circle cx="740.3" cy="692.8" r="3.3" fill="#E8482A" stroke="#C0301A" stroke-width="0.6"/>
<rect x="738.2" y="692.2" width="4.2" height="1.3" fill="#fff"/>
<g fill="#A8A8A8"><rect x="853" y="694" width="2" height="2"/><rect x="849" y="698" width="2" height="2"/><rect x="853" y="698" width="2" height="2"/><rect x="845" y="702" width="2" height="2"/><rect x="849" y="702" width="2" height="2"/><rect x="853" y="702" width="2" height="2"/></g></svg>
</body></html>
